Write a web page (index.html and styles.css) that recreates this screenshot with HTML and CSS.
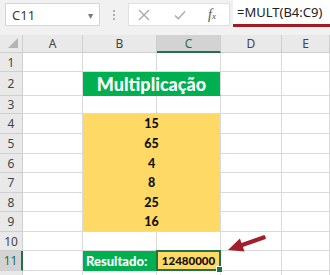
FILE: index.html
```
<!DOCTYPE html>
<html>
<head>
<link rel="stylesheet" href="styles.css">
</head>
<body>
<div class="top">
  <div class="fbar">
    <div class="namebox"><span>C11</span><span class="caret">&#9662;</span></div>
    <div class="dots"><i></i><i></i><i></i></div>
    <div class="btns">
      <svg class="ico" width="12" height="12" viewBox="0 0 12 12"><path d="M1 1L11 11M11 1L1 11" stroke="#a6a6a6" stroke-width="1.3" fill="none"/></svg>
      <svg class="ico" width="12" height="12" viewBox="0 0 12 12"><path d="M1 6.5L4.3 9.8L11 2.5" stroke="#a6a6a6" stroke-width="1.3" fill="none"/></svg>
      <span class="fx">f<sub>x</sub></span>
    </div>
    <div class="formula">=MULT(B4:C9)</div>
  </div>
</div>

<div class="sheet">
  <div class="hd corner"><svg width="12" height="12" viewBox="0 0 12 12"><path d="M11 1V11H1Z" fill="#b5b5b5"/></svg></div>
  <div class="hd col">A</div>
  <div class="hd col">B</div>
  <div class="hd col sel">C</div>
  <div class="hd col">D</div>
  <div class="hd col">E</div>

  <div class="hd row">1</div><div class="c"></div><div class="c"></div><div class="c"></div><div class="c"></div><div class="c"></div>
  <div class="hd row">2</div><div class="c"></div><div class="c title span2">Multiplicação</div><div class="c"></div><div class="c"></div>
  <div class="hd row">3</div><div class="c"></div><div class="c"></div><div class="c"></div><div class="c"></div><div class="c"></div>
  <div class="hd row">4</div><div class="c"></div><div class="c num span2">15</div><div class="c"></div><div class="c"></div>
  <div class="hd row">5</div><div class="c"></div><div class="c num span2">65</div><div class="c"></div><div class="c"></div>
  <div class="hd row">6</div><div class="c"></div><div class="c num span2">4</div><div class="c"></div><div class="c"></div>
  <div class="hd row">7</div><div class="c"></div><div class="c num span2">8</div><div class="c"></div><div class="c"></div>
  <div class="hd row">8</div><div class="c"></div><div class="c num span2">25</div><div class="c"></div><div class="c"></div>
  <div class="hd row">9</div><div class="c"></div><div class="c num span2 last">16</div><div class="c"></div><div class="c"></div>
  <div class="hd row">10</div><div class="c"></div><div class="c"></div><div class="c"></div><div class="c"></div><div class="c"></div>
  <div class="hd row selrow">11</div><div class="c"></div><div class="c label">Resultado:</div><div class="c result">12480000<span class="handle"></span></div><div class="c"></div><div class="c"></div>
  <div class="hd row">12</div><div class="c"></div><div class="c"></div><div class="c"></div><div class="c"></div><div class="c"></div>

  <svg class="arrow" width="46" height="28" viewBox="0 0 46 28">
    <path d="M4 18L15.9 6.4L17.5 10.9L40.3 2.9Q42.5 4.8 41.7 7.1L18.9 15.1L20.5 19.6Z" fill="#a01f2a"/>
  </svg>
</div>
</body>
</html>
```

FILE: styles.css
```
body{
  margin:0;
  background:#fff;
  font-family:"Noto Sans", "Open Sans", sans-serif;
}

.top{
  height:35px;
  background:#f1f1f1;
}

.fbar{
  display:flex;
  align-items:flex-start;
  height:30px;
}

.namebox{
  margin:3px 0 0 5px;
  width:95px;
  height:23px;
  box-sizing:border-box;
  background:#fff;
  border:1px solid #d6d6d6;
  display:flex;
  align-items:center;
  justify-content:space-between;
  padding:0 6px 0 6px;
  font-size:13px;
  color:#3a3a3a;
}

.caret{
  font-size:10px;
  color:#777;
}

.dots{
  width:28px;
  height:23px;
  margin-top:3px;
  display:flex;
  flex-direction:column;
  align-items:center;
  justify-content:center;
  gap:2px;
}
.dots i{
  display:block;
  width:2px;
  height:2px;
  background:#b0b0b0;
}

.btns{
  margin-top:3px;
  width:102px;
  height:23px;
  box-sizing:border-box;
  background:#fff;
  border:1px solid #e0e0e0;
  display:flex;
  align-items:center;
  padding-left:9px;
  gap:24px;
}

.fx{
  font-family:"Liberation Serif", serif;
  font-style:italic;
  font-size:14px;
  color:#555;
  margin-left:-2px;
}
.fx sub{
  font-size:9px;
  vertical-align:0;
}

.formula{
  margin-left:3px;
  flex:1;
  height:27px;
  box-sizing:border-box;
  background:#fff;
  border-bottom:3px solid #a11d22;
  font-size:13px;
  color:#222;
  padding:3px 0 0 4px;
}

.sheet{
  position:relative;
  display:grid;
  grid-template-columns:23px 60px 74px 64px 61px 1fr;
  grid-template-rows:18px 19px 24px 18px 20px 20px 19px 20px 19px 20px 19px 20px 20px;
}

.c{
  box-sizing:border-box;
  border-right:1px solid #dadada;
  border-bottom:1px solid #dadada;
}

.hd{
  box-sizing:border-box;
  background:#e9e9e9;
  border-right:1px solid #cfcfcf;
  border-bottom:1px solid #cfcfcf;
  font-size:12px;
  color:#444;
  display:flex;
  align-items:center;
  justify-content:center;
}

.corner{
  justify-content:flex-end;
  align-items:flex-end;
  padding:0 3px 3px 0;
}

.col.sel{
  background:#d3d3d3;
  border-bottom:2px solid #217346;
  color:#217346;
}

.row.selrow{
  background:#d3d3d3;
  border-right:2px solid #217346;
  color:#217346;
}

.span2{
  grid-column:span 2;
}

.title{
  background:#00b050;
  border-color:#00b050 #dadada #00b050 #00b050;
  color:#fff;
  font-family:Lato, sans-serif;
  font-weight:900;
  font-size:18px;
  display:flex;
  align-items:center;
  justify-content:center;
}

.num{
  background:#ffd966;
  border-bottom-color:#ffd966;
  font-family:Lato, sans-serif;
  font-weight:900;
  font-size:12.5px;
  color:#111;
  display:flex;
  align-items:center;
  justify-content:center;
}
.num.last{
  border-bottom-color:#dadada;
}

.label{
  background:#00b050;
  border-color:#00b050;
  color:#fff;
  font-family:Lato, sans-serif;
  font-weight:900;
  font-size:13px;
  display:flex;
  align-items:center;
  padding-left:3px;
}

.result{
  position:relative;
  background:#ffd966;
  border:2px solid #217346;
  margin:-1px 0 0 -1px;
  font-family:Lato, sans-serif;
  font-weight:900;
  font-size:11.5px;
  color:#111;
  display:flex;
  align-items:center;
  justify-content:center;
}

.handle{
  position:absolute;
  right:-4px;
  bottom:-4px;
  width:5px;
  height:5px;
  background:#217346;
  border:1px solid #fff;
}

.arrow{
  position:absolute;
  left:224px;
  top:197px;
}
```
